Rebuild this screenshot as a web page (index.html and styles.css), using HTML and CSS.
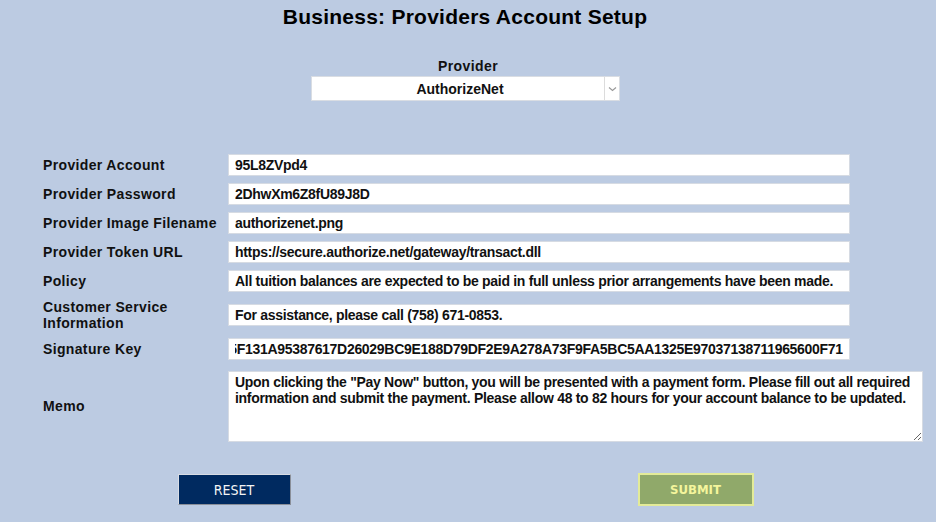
FILE: index.html
```
<!DOCTYPE html>
<html lang="en">
<head>
    <meta charset="UTF-8">
    <title>Business: Providers Account Setup</title>
    <link rel="stylesheet" href="styles.css">
</head>
<body>
    <h1 class="page-title">Business: Providers Account Setup</h1>

    <div class="provider-pick">
        <label for="provider">Provider</label>
        <div class="select-box">
            <select id="provider">
                <option selected>AuthorizeNet</option>
                <option>PayPal</option>
                <option>Stripe</option>
            </select>
            <span class="select-arrow">
                <svg width="9" height="6" viewBox="0 0 9 6"><path d="M1 1.5 L4.5 4.5 L8 1.5" fill="none" stroke="#9a9a9a" stroke-width="1.2"/></svg>
            </span>
        </div>
    </div>

    <form class="setup-form" id="setup-form">
        <div class="form-grid">
            <label for="acct">Provider Account</label>
            <input type="text" id="acct" value="95L8ZVpd4">

            <label for="pass">Provider Password</label>
            <input type="text" id="pass" value="2DhwXm6Z8fU89J8D">

            <label for="img">Provider Image Filename</label>
            <input type="text" id="img" value="authorizenet.png">

            <label for="token">Provider Token URL</label>
            <input type="text" id="token" value="https://secure.authorize.net/gateway/transact.dll">

            <label for="policy">Policy</label>
            <input type="text" id="policy" value="All tuition balances are expected to be paid in full unless prior arrangements have been made.">

            <label for="service" class="two-line">Customer Service Information</label>
            <input type="text" id="service" value="For assistance, please call (758) 671-0853.">

            <label for="sigkey">Signature Key</label>
            <input type="text" id="sigkey" value="7C03E92AD2D5F131A95387617D26029BC9E188D79DF2E9A278A73F9FA5BC5AA1325E97037138711965600F71">

            <label for="memo" class="memo-label">Memo</label>
            <textarea id="memo" rows="4">Upon clicking the "Pay Now" button, you will be presented with a payment form. Please fill out all required information and submit the payment. Please allow 48 to 82 hours for your account balance to be updated.</textarea>
        </div>

        <div class="form-buttons">
            <div class="btn-cell"><button type="reset" class="btn-reset">RESET</button></div>
            <div class="btn-cell"><button type="submit" class="btn-submit">SUBMIT</button></div>
        </div>
    </form>

    <script>
        // long key is shown scrolled to its end
        var key = document.getElementById('sigkey');
        key.scrollLeft = key.scrollWidth;

        document.getElementById('setup-form').addEventListener('submit', function(event) {
            event.preventDefault();
        });
    </script>
</body>
</html>
```

FILE: styles.css
```
body {
    margin: 0;
    padding: 0;
    background-color: #bccbe2;
    color: #111;
    font-family: "Liberation Sans", Arial, sans-serif;
    font-size: 14px;
}
.page-title {
    margin: 0 6px 0 0;
    padding-top: 4px;
    font-size: 21px;
    line-height: 25px;
    letter-spacing: 0.25px;
    text-align: center;
    color: #000;
}
.provider-pick {
    display: flex;
    flex-direction: column;
    align-items: center;
    margin-top: 29px;
    margin-right: 5px;
}
.provider-pick label {
    font-weight: bold;
    line-height: 16px;
    letter-spacing: 0.4px;
    margin-bottom: 2px;
    margin-left: 5px;
}
.select-box {
    display: flex;
    width: 307px;
    height: 23px;
    background-color: #fff;
    border: 1px solid #d9dde3;
}
.select-box select {
    flex: 1;
    appearance: none;
    -webkit-appearance: none;
    border: none;
    outline: none;
    background: transparent;
    font-family: inherit;
    font-size: 14px;
    font-weight: bold;
    color: #111;
    text-align: center;
    text-align-last: center;
    padding: 0 0 0 4px;
}
.select-arrow {
    display: flex;
    align-items: center;
    justify-content: center;
    width: 14px;
    border-left: 1px solid #dcdcdc;
}
.setup-form {
    margin-top: 53px;
}
.form-grid {
    display: grid;
    grid-template-columns: 185px auto;
    row-gap: 7px;
    align-items: center;
    justify-items: start;
    margin-left: 43px;
}
.form-grid label {
    font-weight: bold;
    line-height: 17px;
    letter-spacing: 0.35px;
}
.form-grid label.two-line {
    line-height: 16px;
}
.form-grid input,
.form-grid textarea {
    box-sizing: border-box;
    font-family: inherit;
    font-size: 14px;
    font-weight: bold;
    letter-spacing: -0.3px;
    color: #111;
    background-color: #fff;
    border: 1px solid #d6dbe3;
    outline: none;
    margin: 0;
}
.form-grid input {
    width: 622px;
    height: 22px;
    padding: 0 6px;
}
.form-grid textarea {
    width: 695px;
    height: 71px;
    margin-top: 4px;
    padding: 2px 6px;
    line-height: 16px;
    resize: both;
}
.memo-label {
    margin-top: 4px;
}
.form-buttons {
    display: grid;
    grid-template-columns: 468px 455px;
    justify-items: center;
    align-items: center;
    margin-top: 31px;
}
.btn-reset {
    width: 113px;
    height: 31px;
    background-color: #002a60;
    color: #f4f4f4;
    border: 1px solid;
    border-color: #d8dce4 #8a8f99 #8a8f99 #d8dce4;
    font-family: "DejaVu Sans Condensed", "Liberation Sans", sans-serif;
    font-stretch: condensed;
    font-size: 14px;
    cursor: pointer;
}
.btn-submit {
    width: 116px;
    height: 33px;
    background-color: #90a96a;
    color: #f4f59c;
    border: 2px solid #e3eb98;
    font-family: "DejaVu Sans Condensed", "Liberation Sans", sans-serif;
    font-stretch: condensed;
    font-size: 13px;
    font-weight: bold;
    cursor: pointer;
}
.btn-reset:hover {
    background-color: #0a3a7a;
}
.btn-submit:hover {
    background-color: #9db677;
}
```
